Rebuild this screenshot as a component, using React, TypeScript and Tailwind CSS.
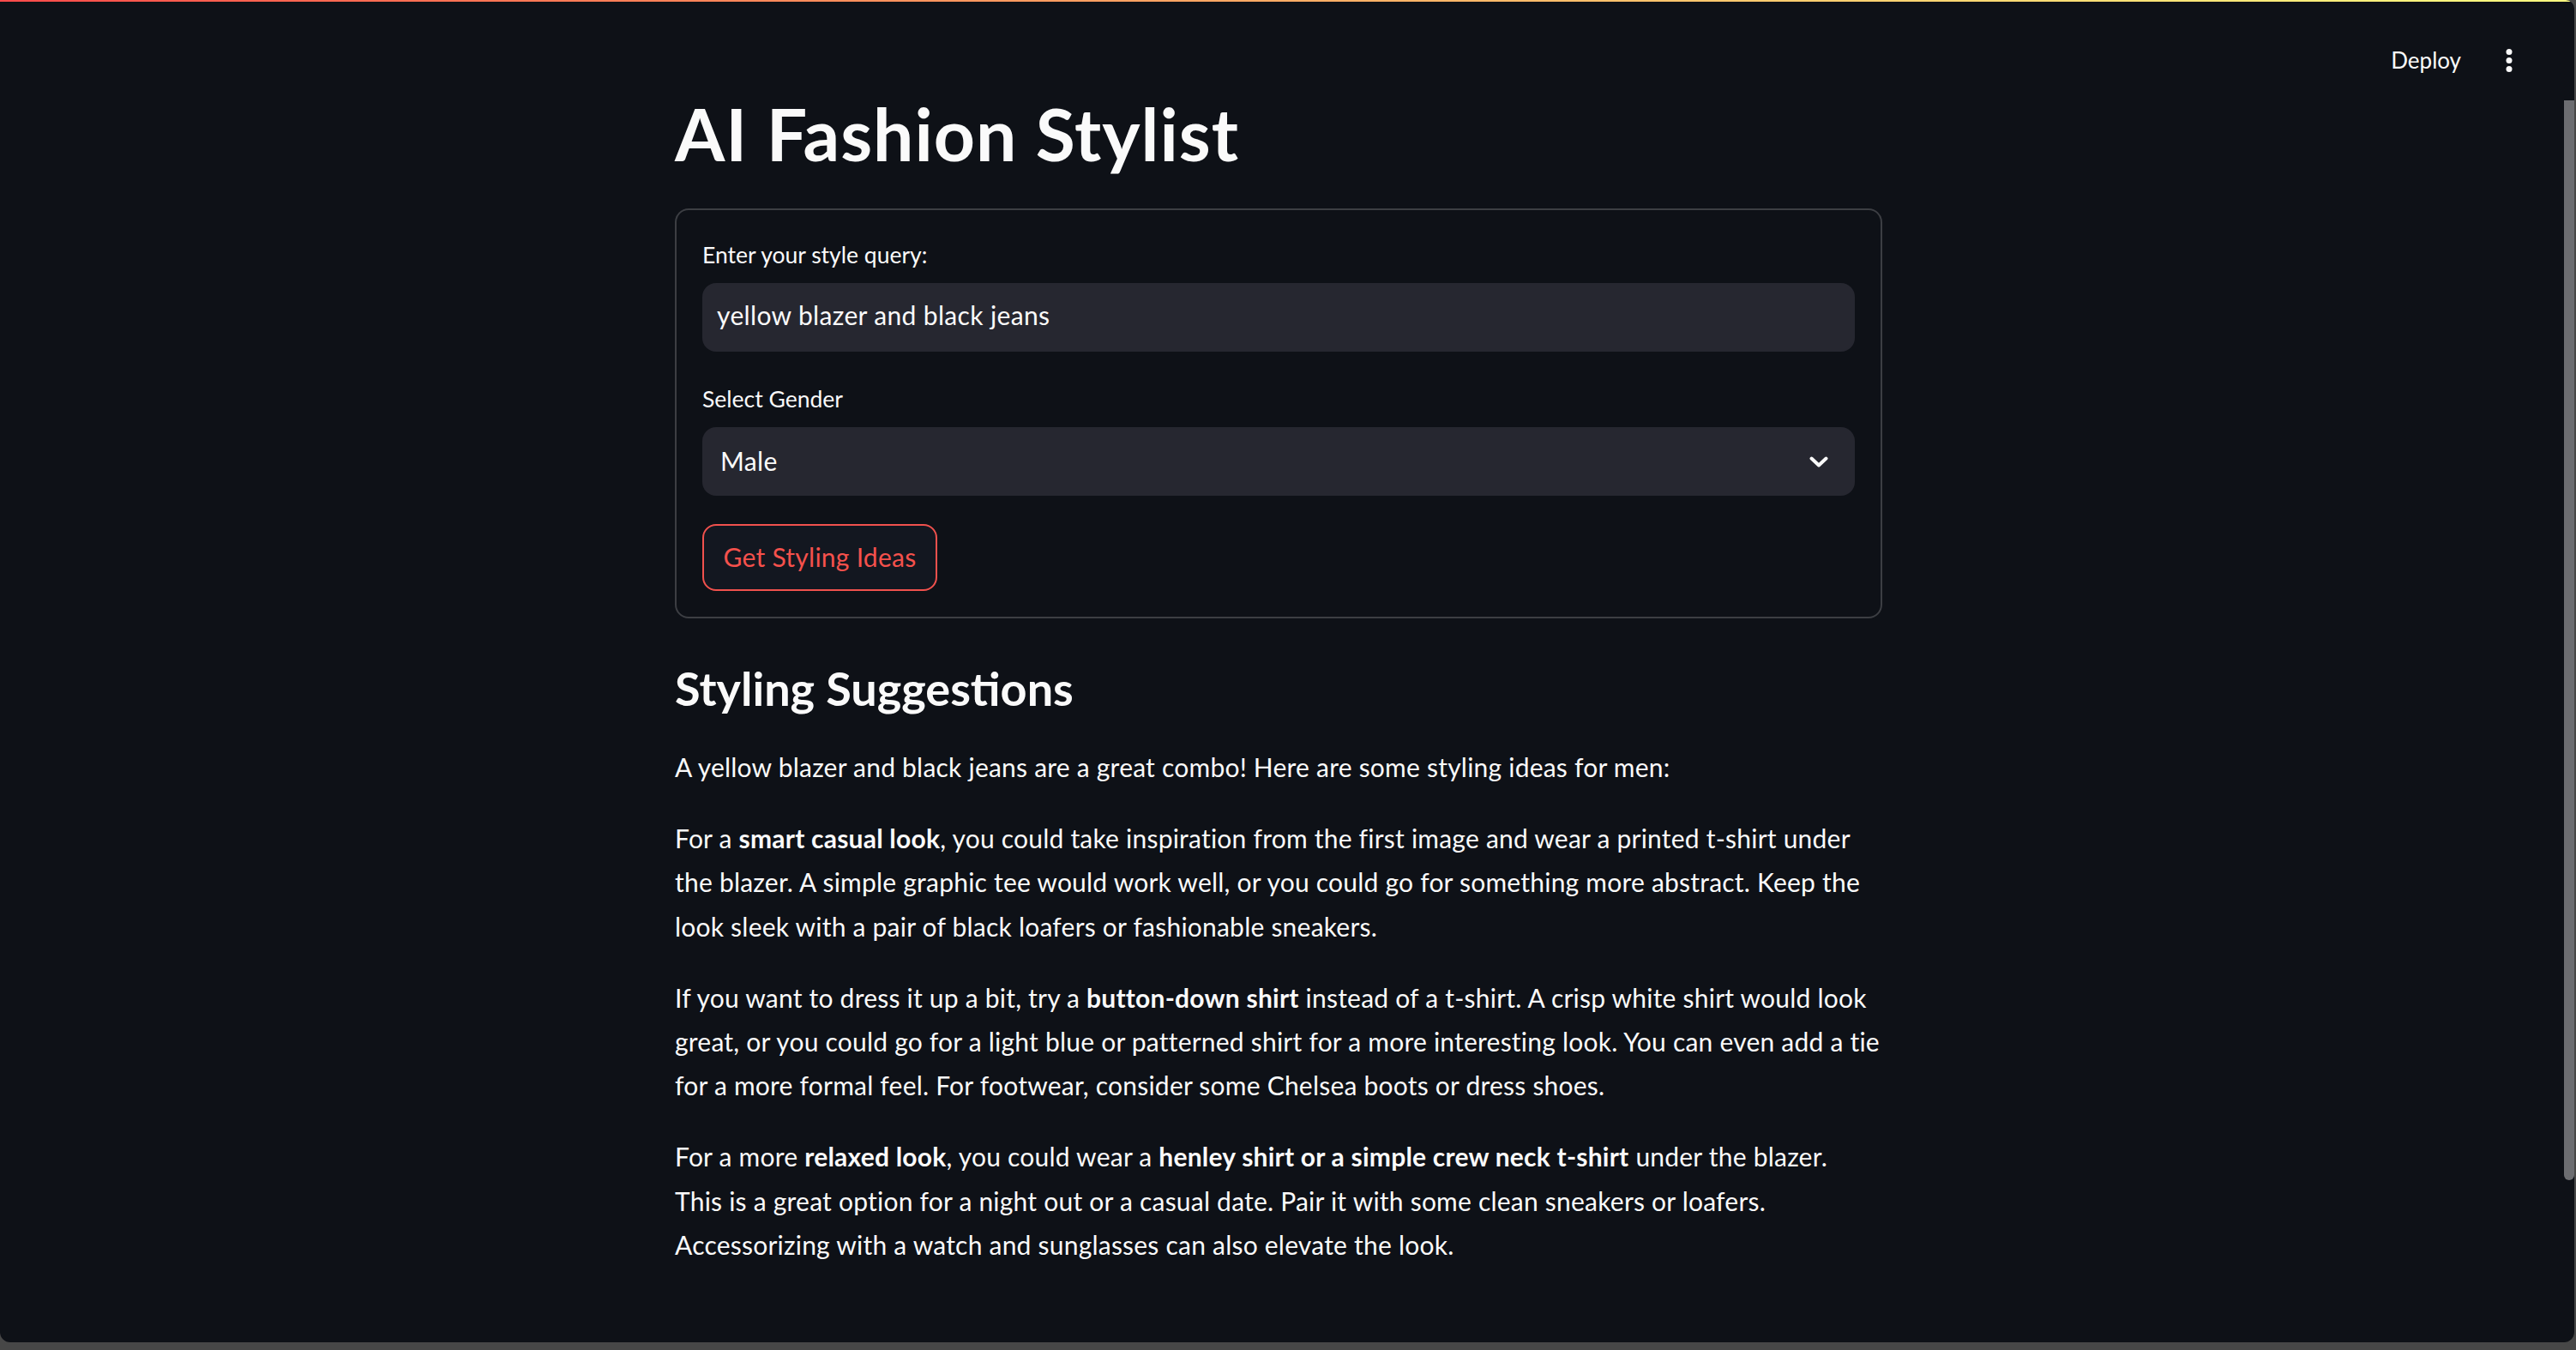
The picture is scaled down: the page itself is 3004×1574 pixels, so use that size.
const paragraphs = [
  {
    lines: [
      <>For a <b className="font-bold">smart casual look</b>, you could take inspiration from the first image and wear a printed t-shirt under</>,
      <>the blazer. A simple graphic tee would work well, or you could go for something more abstract. Keep the</>,
      <>look sleek with a pair of black loafers or fashionable sneakers.</>,
    ],
  },
  {
    lines: [
      <>If you want to dress it up a bit, try a <b className="font-bold">button-down shirt</b> instead of a t-shirt. A crisp white shirt would look</>,
      <>great, or you could go for a light blue or patterned shirt for a more interesting look. You can even add a tie</>,
      <>for a more formal feel. For footwear, consider some Chelsea boots or dress shoes.</>,
    ],
  },
  {
    lines: [
      <>For a more <b className="font-bold">relaxed look</b>, you could wear a <b className="font-bold">henley shirt or a simple crew neck t-shirt</b> under the blazer.</>,
      <>This is a great option for a night out or a casual date. Pair it with some clean sneakers or loafers.</>,
      <>Accessorizing with a watch and sunglasses can also elevate the look.</>,
    ],
  },
];

const MenuDots = () => (
  <svg width="8" height="27" viewBox="0 0 8 27" fill="#fafafa">
    <circle cx="4" cy="3.5" r="3.5" />
    <circle cx="4" cy="13.5" r="3.5" />
    <circle cx="4" cy="23.5" r="3.5" />
  </svg>
);

const Chevron = () => (
  <svg width="22" height="13" viewBox="0 0 22 13" fill="none">
    <polyline points="2.5,2.5 11,10.5 19.5,2.5" stroke="#fafafa" strokeWidth="4" strokeLinecap="round" strokeLinejoin="round" />
  </svg>
);

export default function App() {
  return (
    <div className="h-[1574px] w-[3004px] bg-[#474747] overflow-hidden font-['Lato',sans-serif] text-[#fafafa]">
      <div className="relative h-[1565px] mr-[2px] bg-[#0e1117] rounded-b-[12px] rounded-tr-[10px] overflow-hidden">
        <div className="h-[2px] bg-gradient-to-r from-[#ff4b4b] to-[#fffd80]" />

        {/* header */}
        <div className="flex justify-end items-start h-[105px] pt-[50px] pr-[72px] gap-[52px]">
          <span className="text-[26px] leading-[36px]">Deploy</span>
          <div className="pt-[5px]">
            <MenuDots />
          </div>
        </div>

        {/* scrollbar thumb */}
        <div className="absolute right-0 top-[117px] w-[12px] h-[1259px] bg-[#6c6d71] rounded-b-[6px]" />

        <div className="w-[2982px]">
          <main className="mx-auto w-[1408px]">
            <h1 className="text-[84px] leading-[98px] font-bold tracking-[1px]">AI Fashion Stylist</h1>

            <div className="mt-[38px] border-2 border-[#3c3e43] rounded-[16px] p-[30px] flex flex-col">
              <label className="text-[26.5px] leading-[44px] mb-[11px]">Enter your style query:</label>
              <div className="h-[80px] bg-[#262730] rounded-[16px] flex items-center pl-[17px] pb-[6px] text-[30px] tracking-[0.35px]">
                yellow blazer and black jeans
              </div>

              <label className="mt-[33px] text-[26.5px] leading-[44px] mb-[11px]">Select Gender</label>
              <div className="h-[80px] bg-[#262730] rounded-[16px] flex items-center justify-between pl-[21px] pr-[31px] text-[30px] tracking-[0.35px]">
                <span className="pb-[2px]">Male</span>
                <Chevron />
              </div>

              <button className="mt-[33px] w-[274px] h-[78px] border-2 border-[#f0514d] rounded-[16px] bg-[#131720] text-[#f5514c] text-[30px] tracking-[0.25px] flex items-center justify-center pb-[2px]">
                Get Styling Ideas
              </button>
            </div>

            <h3 className="mt-[50px] text-[54px] leading-[64px] font-bold">Styling Suggestions</h3>

            <div className="mt-[34px] text-[30px] leading-[51.2px] tracking-[0.22px] whitespace-nowrap">
              <p className="mb-[32px]">A yellow blazer and black jeans are a great combo! Here are some styling ideas for men:</p>
              {paragraphs.map((p, i) => (
                <p key={i} className="mb-[32px]">
                  {p.lines.map((l, j) => (
                    <span key={j} className="block">
                      {l}
                    </span>
                  ))}
                </p>
              ))}
            </div>
          </main>
        </div>
      </div>
    </div>
  );
}
